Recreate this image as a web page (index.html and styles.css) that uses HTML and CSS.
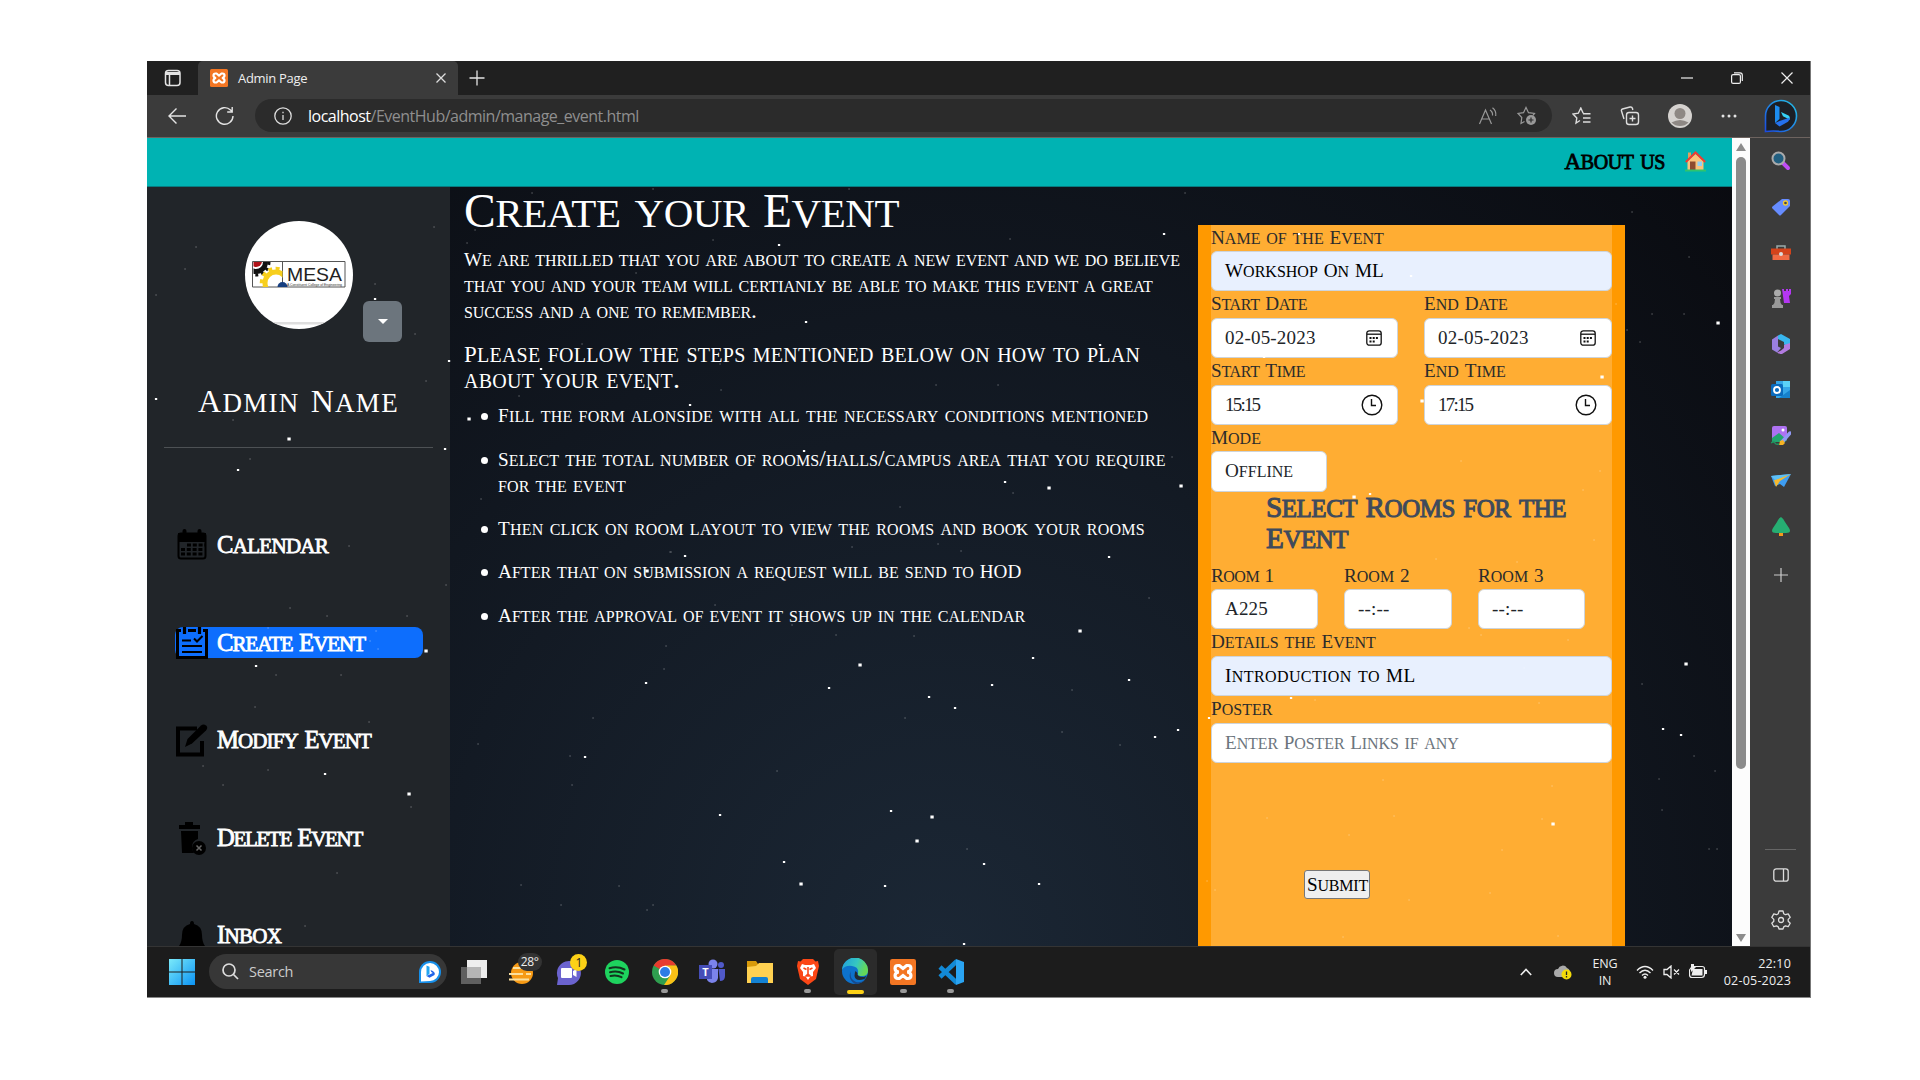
FILE: index.html
```html
<!DOCTYPE html>
<html lang="en">
<head>
<meta charset="utf-8">
<title>Admin Page</title>
<link rel="stylesheet" href="styles.css">
</head>
<body>
<div class="window">
  <header class="tabs">
    <svg class="workspaces" width="18" height="18" viewBox="0 0 18 18" fill="none" stroke="#e4e4e4" stroke-width="1.5"><rect x="1.5" y="1.5" width="14.500" height="15" rx="3"/><path d="M2 4.500h14" stroke-width="3"/><path d="M5.500 5v11"/></svg>
    <div class="tab">
      <svg width="18" height="18" viewBox="0 0 18 18"><rect width="18" height="18" rx="1.500" fill="#f37623"/><path d="M5.500 4.500h1L9 6.500l2.500-2h1q2 0 2 2T12 9q2.500.5 2.500 2.500t-2 2h-1L9 11.500l-2.500 2h-1q-2 0-2-2T6 9q-2.500-.5-2.500-2.500t2-2z" fill="none" stroke="#fff" stroke-width="2.200"/></svg>
      <span class="tab-title">Admin Page</span>
      <svg width="10" height="10" viewBox="0 0 10 10" stroke="#ddd" stroke-width="1.300"><path d="M.5.5l9 9M9.500.5l-9 9"/></svg>
    </div>
    <svg class="newtab" width="16" height="16" viewBox="0 0 16 16" stroke="#e4e4e4" stroke-width="1.300"><path d="M8 .5v15M.5 8h15"/></svg>
    <div class="controls">
      <svg width="12" height="12" viewBox="0 0 12 12" stroke="#eee" stroke-width="1.200"><path d="M0 6h12"/></svg>
      <svg width="12" height="12" viewBox="0 0 12 12" fill="none" stroke="#eee" stroke-width="1.200"><rect x=".6" y="2.600" width="8.800" height="8.800" rx="1.500"/><path d="M3 .8h6q2.300 0 2.300 2.300V9"/></svg>
      <svg width="12" height="12" viewBox="0 0 12 12" stroke="#eee" stroke-width="1.200"><path d="M.5.5l11 11M11.500.5l-11 11"/></svg>
    </div>
  </header>
  <div class="toolbar">
    <svg class="back" width="20" height="18" viewBox="0 0 20 18" fill="none" stroke="#e4e4e4" stroke-width="1.400"><path d="M19 9H2M9.500 1.500L2 9l7.500 7.500"/></svg>
    <svg class="reload" width="20" height="20" viewBox="0 0 20 20" fill="none" stroke="#e4e4e4" stroke-width="1.400"><path d="M18 10a8.300 8.300 0 1 1-2.500-6L17 5.500M17.200 1v5h-5"/></svg>
    <div class="address">
      <svg width="18" height="18" viewBox="0 0 18 18" fill="none" stroke="#ddd" stroke-width="1.300"><circle cx="9" cy="9" r="8.200"/><path d="M9 8v5M9 4.800v1.500"/></svg>
      <span class="url"><b>localhost</b>/EventHub/admin/manage_event.html</span>
      <svg class="read" width="20" height="18" viewBox="0 0 20 18" fill="none" stroke="#999" stroke-width="1.200"><path d="M1.500 17L7.500 3l6 14M3.500 12h8M12 3q3 2 2.500 5.500M14.500.8q4 3 3.200 8.200"/></svg>
      <svg width="20" height="20" viewBox="0 0 20 20" fill="none" stroke="#999" stroke-width="1.200"><path d="M7.500 15.500l-3.500 2 .8-6L1 7.500l5.500-.8L9 1.500l2.500 5.200 6 .8-1.500 1.800"/><circle cx="14" cy="14" r="5" fill="#999" stroke="none"/><path d="M14 11.500v5M11.500 14h5" stroke="#2b2b2b"/></svg>
    </div>
    <div class="tools">
      <svg width="20" height="18" viewBox="0 0 20 18" fill="none" stroke="#ddd" stroke-width="1.400"><path d="M8 13.500L4 16l.8-5L1 7l5.300-.8L8.800 1l2.400 5.200M11 6.800h7.500M11 11h7.500M11 15h7.500"/></svg>
      <svg width="20" height="20" viewBox="0 0 20 20" fill="none" stroke="#ddd" stroke-width="1.400"><rect x="6.500" y="6.500" width="12" height="12" rx="2.500"/><path d="M12.500 9.500v6M9.500 12.500h6M4 13L1.500 5Q1 3.500 2.500 3l7.500-2q2-.4 2.500 1.500l.3 1.500"/></svg>
      <svg width="24" height="24" viewBox="0 0 24 24"><circle cx="12" cy="12" r="12" fill="#d5d2cf"/><circle cx="12" cy="9.500" r="5.500" fill="#8e8884"/><path d="M3.500 18.500q8.500-5 17 0a12 12 0 0 1-17 0z" fill="#8e8884"/></svg>
      <svg width="16" height="4" viewBox="0 0 16 4" fill="#e4e4e4"><circle cx="2" cy="2" r="1.500"/><circle cx="8" cy="2" r="1.500"/><circle cx="14" cy="2" r="1.500"/></svg>
      <svg width="34" height="34" viewBox="0 0 34 34"><defs><linearGradient id="bing" x1="0" y1="1" x2="1" y2="0"><stop offset="0" stop-color="#1b4ae0"/><stop offset="1" stop-color="#25c2e8"/></linearGradient></defs><path d="M1.500 32.500V17A15.500 15.500 0 1 1 17 32.500q-8-1-15.500 0z" fill="#1c1f26" stroke="url(#bing)" stroke-width="1.600"/><path d="M11 6l4.500 2v12l-4.500 4z" fill="#1c8cf0"/><path d="M17 13l7.500 3.500q2 1.500 1 4.500l-3-2-3.500-1.800z" fill="#36d0f5"/><path d="M11 24l4.500 3.500 8.500-4.800q2-2 1.500-4L15.500 22z" fill="#2471ef"/></svg>
    </div>
  </div>
  <div class="main">
    <div class="page">
      <nav class="topnav">
        <span class="sc about"><i>A</i>bout us</span>
        <svg width="21" height="21" viewBox="0 0 21 21"><rect x="3" y="1.500" width="3" height="6" fill="#e0a060"/><path d="M2.500 10L10.500 3l8 7v9h-16z" fill="#f9c27a"/><path d="M.8 11L10.500 1.500 20.200 11" fill="none" stroke="#ee3b32" stroke-width="2"/><path d="M5 10.500h5.500V19H5z" fill="#8c4a2f"/><path d="M12.500 10.500h4.500v4.500h-4.500z" fill="#8fd0f5"/><path d="M0 18.500h21v2H0z" fill="#2fc46d"/></svg>
      </nav>
      <div class="content">
        <aside>
          <div class="profile">
            <svg class="avatar" width="108" height="108" viewBox="0 0 108 108"><defs><clipPath id="round"><circle cx="54" cy="54" r="54"/></clipPath><clipPath id="gearbox"><path d="M8.500 41h29v25h-29z"/></clipPath></defs><g clip-path="url(#round)"><path fill="#fff" d="M0 0h108v108H0z"/><path fill="#dedede" d="M0 101h108v2.500H0z"/></g><path d="M7.500 40.500h92.500v25.500H7.500zM37.500 40.500V66" fill="#fff" stroke="#555" stroke-width="1"/><g clip-path="url(#gearbox)" fill="none"><circle cx="11" cy="41" r="9.500" stroke="#111" stroke-width="5"/><circle cx="11" cy="41" r="13" stroke="#111" stroke-width="3" stroke-dasharray="3 3"/><circle cx="11" cy="40" r="6" fill="#b01218"/><circle cx="31" cy="62" r="11" stroke="#f7cf1d" stroke-width="5"/><circle cx="31" cy="62" r="14.500" stroke="#f7cf1d" stroke-width="3.500" stroke-dasharray="4 3.500"/></g><path d="M32.500 66a5 5 0 0 1 10 0z" fill="#173f80"/><text x="42" y="60" textLength="55" lengthAdjust="spacingAndGlyphs" font-family="Liberation Sans, sans-serif" font-size="18" fill="#222">MESA</text><text x="42" y="64.500" textLength="55" lengthAdjust="spacingAndGlyphs" font-family="Liberation Sans, sans-serif" font-size="4" fill="#333">A Constituent College of Engineering</text></svg>
            <div class="caret"><svg width="10" height="5" viewBox="0 0 10 5"><path d="M0 0h10L5 5z" fill="#fff"/></svg></div>
          </div>
          <h2 class="sc"><i>A</i>dmin <i>N</i>ame</h2>
          <hr>
          <ul class="menu">
            <li><svg width="34" height="34" viewBox="0 0 34 34"><rect x="3.500" y="5.500" width="27" height="25" rx="2.500" fill="none" stroke="#000" stroke-width="2"/><path d="M3 5h28v9H3z"/><path d="M9.500 3v5M24.500 3v5" stroke="#000" stroke-width="4" stroke-linecap="round"/><path d="M12 17h18M6 21.500h22M6 26h22" stroke="#000" stroke-width="3.200" stroke-dasharray="4 1.800"/></svg><span class="sc"><i>C</i>alendar</span></li>
            <li class="active"><svg width="34" height="34" viewBox="0 0 34 34" fill="none" stroke="#000"><path d="M6 4.500H2.500v27h29v-27H28M13 4.500h8" stroke-width="3"/><path d="M9.500 1v7M24.500 1v7" stroke-width="3.200"/><path d="M7 14.500h9M7 20h20M7 26h20" stroke-width="2"/><path d="M19 12.500l3 3 5.500-5.500" stroke-width="2"/></svg><span class="sc"><i>C</i>reate <i>E</i>vent</span></li>
            <li><svg width="34" height="34" viewBox="0 0 34 34"><path d="M22 5.500H3v26h24V18" fill="none" stroke="#000" stroke-width="4"/><path d="M10 24l2.500-8L26 2.500q2.500-2 5 0t0 5L17 20.500z"/></svg><span class="sc"><i>M</i>odify <i>E</i>vent</span></li>
            <li><svg width="34" height="34" viewBox="0 0 34 34"><path d="M4 4h6V1h8v3h7v4H4zM6 10h17v8q-6 2-6 8 0 3 2 6H7z"/><circle cx="24" cy="27" r="7"/><path d="M21.500 24.500l5 5M26.500 24.500l-5 5" stroke="#666" stroke-width="1.500"/></svg><span class="sc"><i>D</i>elete <i>E</i>vent</span></li>
            <li><svg width="34" height="34" viewBox="0 0 34 34"><path d="M15 6q0-3 2-3t2 3q8 2 8 11 0 7 3 11H4q3-4 3-11 0-9 8-11z"/></svg><span class="sc"><i>I</i>nbox</span></li>
          </ul>
        </aside>
        <section class="guide sc">
          <h1><i>C</i>reate your <i>E</i>vent</h1>
          <p><i>W</i>e are thrilled that you are about to create a new event and we do believe<br>that you and your team will certianly be able to make this event a great<br>success and a one to remember.</p>
          <h3><i>P</i>lease follow the steps mentioned below on how to plan<br>about your event.</h3>
          <ul>
            <li><i>F</i>ill the form alonside with all the necessary conditions mentioned</li>
            <li><i>S</i>elect the total number of rooms/halls/campus area that you require<br>for the event</li>
            <li><i>T</i>hen click on room layout to view the rooms and book your rooms</li>
            <li><i>A</i>fter that on submission a request will be send to <i>HOD</i></li>
            <li><i>A</i>fter the approval of event it shows up in the calendar</li>
          </ul>
        </section>
        <form class="event sc">
          <div class="field"><label><i>N</i>ame of the <i>E</i>vent</label><div class="input filled"><span><i>W</i>orkshop <i>O</i>n <i>ML</i></span></div></div>
          <div class="pair">
            <div class="field"><label class="tight"><i>S</i>tart <i>D</i>ate</label><div class="input"><span class="num">02-05-2023</span><svg class="cal" width="16" height="16" viewBox="0 0 16 16" fill="none" stroke="#111" stroke-width="1.300"><rect x=".8" y=".8" width="14.400" height="14.400" rx="2.500"/><path d="M1 4.200h14"/><path d="M3.500 8h8.500M3.500 11.500h6" stroke-width="2" stroke-dasharray="2 1.200"/></svg></div></div>
            <div class="field"><label><i>E</i>nd <i>D</i>ate</label><div class="input"><span class="num">02-05-2023</span><svg class="cal" width="16" height="16" viewBox="0 0 16 16" fill="none" stroke="#111" stroke-width="1.300"><rect x=".8" y=".8" width="14.400" height="14.400" rx="2.500"/><path d="M1 4.200h14"/><path d="M3.500 8h8.500M3.500 11.500h6" stroke-width="2" stroke-dasharray="2 1.200"/></svg></div></div>
          </div>
          <div class="pair">
            <div class="field"><label class="tight"><i>S</i>tart <i>T</i>ime</label><div class="input"><span class="num time">15:15</span><svg width="22" height="22" viewBox="0 0 22 22" fill="none" stroke="#111" stroke-width="1.400"><circle cx="11" cy="11" r="9.800"/><path d="M10.500 5v6.500H15"/></svg></div></div>
            <div class="field"><label><i>E</i>nd <i>T</i>ime</label><div class="input"><span class="num time">17:15</span><svg width="22" height="22" viewBox="0 0 22 22" fill="none" stroke="#111" stroke-width="1.400"><circle cx="11" cy="11" r="9.800"/><path d="M10.500 5v6.500H15"/></svg></div></div>
          </div>
          <div class="field mode"><label><i>M</i>ode</label><div class="input"><span><i>O</i>ffline</span></div></div>
          <h4><i>S</i>elect <i>R</i>ooms for the<br><i>E</i>vent</h4>
          <div class="rooms">
            <div class="field"><label class="room1"><i>R</i>oom <i>1</i></label><div class="input"><span class="num">A225</span></div></div>
            <div class="field"><label><i>R</i>oom <i>2</i></label><div class="input"><span class="num">--:--</span></div></div>
            <div class="field"><label><i>R</i>oom <i>3</i></label><div class="input"><span class="num">--:--</span></div></div>
          </div>
          <div class="field"><label><i>D</i>etails the <i>E</i>vent</label><div class="input filled intro"><span><i>I</i>ntroduction to <i>ML</i></span></div></div>
          <div class="field"><label><i>P</i>oster</label><div class="input hint"><span><i>E</i>nter <i>P</i>oster <i>L</i>inks if any</span></div></div>
          <div class="submit"><i>S</i>ubmit</div>
        </form>
      </div>
      <svg class="stars" viewBox="147 138 1585 808" fill="none" stroke="#fff" stroke-linecap="square"><path stroke-width="1.100" opacity=".45" d="M196 247h.1M185 269h.1M156 295h.1M434 227h.1M375 284h.1M415 334h.1M475 230h.1M467 243h.1M653 189h.1M532 193h.1M426 381h.1M233 420h.1M250 459h.1M349 546h.1M446 585h.1M290 608h.1M327 616h.1M407 616h.1M268 628h.1M376 631h.1M370 641h.1M378 649h.1M276 675h.1M341 675h.1M519 396h.1M481 499h.1M671 552h.1M666 646h.1M664 669h.1M255 707h.1M369 722h.1M203 766h.1M268 770h.1M223 785h.1M411 807h.1M337 873h.1M305 926h.1M593 718h.1M478 744h.1M570 756h.1M572 785h.1M521 885h.1M619 886h.1M561 905h.1M647 910h.1M653 905h.1M713 240h.1M1010 239h.1M636 273h.1M582 344h.1M720 364h.1M721 390h.1M936 385h.1M998 385h.1M1185 193h.1M849 189h.1M1013 493h.1M1172 457h.1M900 507h.1M852 547h.1M938 544h.1M961 551h.1M670 552h.1M1149 598h.1M715 605h.1M792 625h.1M914 636h.1M836 635h.1M1072 690h.1M905 718h.1M777 771h.1M967 849h.1M1120 745h.1M1062 732h.1M1632 212h.1M1689 257h.1M1652 314h.1M1684 314h.1M1627 330h.1M1640 342h.1M1616 304h.1M1642 684h.1M1461 461h.1M1600 471h.1M1583 490h.1M1436 559h.1M1594 540h.1M1517 562h.1M1469 628h.1M1481 635h.1M1568 640h.1M1315 700h.1M1524 668h.1M1539 703h.1M1383 780h.1M1552 786h.1M1267 818h.1M1394 816h.1M1542 819h.1M1349 835h.1M1502 850h.1M1207 881h.1M1215 890h.1M1490 893h.1M1409 900h.1M1343 937h.1M1558 936h.1M1662 810h.1M1715 771h.1M1659 779h.1M1694 756h.1M1709 849h.1M1717 849h.1"/><path stroke-width="2.200" d="M375 299h.1M449 361h.1M541 369h.1M156 399h.1M445 449h.1M238 470h.1M256 666h.1M650 389h.1M690 405h.1M685 556h.1M646 683h.1M325 774h.1M585 757h.1M779 245h.1M1164 234h.1M806 322h.1M1100 345h.1M804 451h.1M1005 482h.1M1109 557h.1M829 688h.1M720 815h.1M984 864h.1M1039 884h.1M784 862h.1M885 886h.1M891 811h.1M929 697h.1M955 708h.1M992 685h.1M1129 680h.1M1033 658h.1M1155 737h.1M1178 730h.1M964 944h.1M1411 276h.1M1663 729h.1M1681 735h.1M1299 234h.1M1370 494h.1M1264 357h.1M1291 698h.1M1209 718h.1"/><path stroke-width="3.200" d="M289 439h.1M469 419h.1M426 651h.1M647 571h.1M409 794h.1M1049 488h.1M1181 486h.1M1018 526h.1M1080 631h.1M860 665h.1M932 817h.1M917 841h.1M801 884h.1M1686 664h.1M1718 323h.1M1602 377h.1M1422 401h.1M1354 497h.1M1553 824h.1"/></svg>
    </div>
    <div class="scrollbar"><svg width="10" height="8" viewBox="0 0 10 8"><path d="M5 0l5 8H0z" fill="#8c8c8c"/></svg><div class="thumb"></div><svg width="10" height="8" viewBox="0 0 10 8"><path d="M0 0h10L5 8z" fill="#8c8c8c"/></svg></div>
    <div class="rail">
      <svg width="20" height="20" viewBox="0 0 20 20"><path d="M12 12l5 5" stroke="#c04df5" stroke-width="4" stroke-linecap="round"/><circle cx="7.500" cy="7.500" r="6" fill="#225f80" stroke="#aaa" stroke-width="2"/></svg>
      <svg width="20" height="20" viewBox="0 0 20 20"><path d="M11 2h6q2 0 2 2v5l-9 9q-1 1-2 0l-6.500-6.500q-1-1 0-2z" fill="#668cff"/><circle cx="14.500" cy="6" r="2" fill="#445" stroke="#f3cb2e" stroke-width="1.300"/></svg>
      <svg width="20" height="20" viewBox="0 0 20 20"><path d="M6 6V3h8v3" fill="none" stroke="#9aa" stroke-width="1.500"/><path d="M0 5.500h20v6H0z" fill="#d4431b"/><path d="M1.500 11.500h17V17h-17z" fill="#f16a43"/><circle cx="10" cy="11" r="2" fill="#ddd"/></svg>
      <svg width="20" height="20" viewBox="0 0 20 20"><path d="M11 1h2v2h2V1h2v2h1V1h2v5l-2 2 1 7h-6z" fill="#b437f2"/><circle cx="6.500" cy="5" r="3.500" fill="#aaa"/><path d="M3 9h7v2H9q0 4 2 6h1v3H1v-3h1q2-2 2-6H3z" fill="#999"/></svg>
      <svg width="20" height="20" viewBox="0 0 20 20"><path d="M1 5.500L7 1.500v11L10 14l-4 4.500-5-3z" fill="#9a7fe0"/><path d="M7 1.500L10 0l9 5v8l-6-2.500V8L7 5z" fill="#38b6ee"/><path d="M19 9v6l-8 5q-2 .5-5-1.500l4-2L13 14v-3z" fill="#b27be0"/></svg>
      <svg width="20" height="20" viewBox="0 0 20 20"><path d="M5 1h14v17H5z" fill="#35a6e8"/><path d="M12 1h7v6h-7z" fill="#5bd2f8"/><path d="M19 10v8H8z" fill="#1681cc"/><rect y="4" width="12" height="12" rx="1.500" fill="#0a6bbd"/><circle cx="6" cy="10" r="3" fill="none" stroke="#fff" stroke-width="1.800"/></svg>
      <svg width="20" height="20" viewBox="0 0 20 20"><rect x="1" width="15" height="15" rx="2" fill="#ae72f2"/><circle cx="12" cy="4" r="1.500" fill="#fff"/><path d="M1 12l7-5 8 7-2 2H1z" fill="#23a66f"/><path d="M11 16l8-9" stroke="#9199f5" stroke-width="3.500" stroke-linecap="round"/><path d="M8 19l1-4 3-1 2 3-2 2z" fill="#f5b323"/><path d="M0 17q3-2 4 0t4 1" fill="none" stroke="#21915f" stroke-width="1.500"/></svg>
      <svg width="20" height="20" viewBox="0 0 20 20"><path d="M0 4l20-2-7 13-4-3-5 2z" fill="#3e9df2"/><path d="M3 8l17-6L9 9l-4 6z" fill="#f5b82e"/><path d="M0 4l20-2L4 8z" fill="#5dc0f5"/></svg>
      <svg width="20" height="20" viewBox="0 0 20 20"><path d="M8 14h4v5H8z" fill="#f39a1d"/><path d="M10 0q3 2 4 5l4 6q3 5-3 5H5q-6 0-3-5l4-6q1-3 4-5z" fill="#26ae72"/></svg>
      <svg class="plus" width="14" height="14" viewBox="0 0 14 14" stroke="#ccc" stroke-width="1.200"><path d="M7 0v14M0 7h14"/></svg>
      <div class="rail-line"></div>
      <svg class="panel" width="16" height="14" viewBox="0 0 16 14" fill="none" stroke="#ddd" stroke-width="1.300"><rect x=".8" y=".8" width="14.400" height="12.400" rx="2.500"/><path d="M10.500 1v12"/></svg>
      <svg class="gear" width="20" height="20" viewBox="0 0 20 20" fill="none" stroke="#ddd" stroke-width="1.300"><path d="M8 1h4l.7 2.700 1.800 1 2.700-.8 2 3.500-2 2v1.800l2 2-2 3.500-2.700-.8-1.800 1L12 19H8l-.7-2.100-1.800-1-2.700.8-2-3.500 2-2V9.400l-2-2 2-3.500 2.700.8 1.800-1z" stroke-linejoin="round"/><circle cx="10" cy="10" r="2.500"/></svg>
    </div>
  </div>
  <footer class="taskbar">
    <svg class="start" width="26" height="26" viewBox="0 0 26 26"><defs><linearGradient id="win" x1="0" y1="0" x2="1" y2="1"><stop offset="0" stop-color="#7beafa"/><stop offset="1" stop-color="#0b93f4"/></linearGradient></defs><path fill="url(#win)" d="M0 0h12.500v12.500H0zM13.500 0H26v12.500H13.500zM0 13.500h12.500V26H0zM13.500 13.500H26V26H13.500z"/></svg>
    <div class="search"><svg width="17" height="17" viewBox="0 0 17 17" fill="none" stroke="#ddd" stroke-width="1.700"><circle cx="7" cy="7" r="6"/><path d="M11.500 11.500l4.500 4.500"/></svg><span>Search</span><svg width="22" height="22" viewBox="0 0 22 22"><path d="M0 22V11a11 11 0 1 1 11 11z" fill="#168fea"/><path d="M2 20.500V11a9 9 0 1 1 9 9z" fill="#fff"/><path d="M7.500 4.500l3 1.200v7l-3 2.500z" fill="#24a5f0"/><path d="M7.500 15l3 1.800 5-2.800q1.500-3-4-5l.8 2 1.500 1z" fill="#2064e8"/></svg></div>
    <div class="apps">
      <div><svg width="28" height="26" viewBox="0 0 28 26"><path d="M7 1h20v18H7z" fill="#eee"/><path d="M1 8h20v17H1z" fill="#707070" opacity=".8"/><path d="M7 8h14v11H7z" fill="#b5b5b5"/></svg></div>
      <div><svg width="28" height="28" viewBox="0 0 28 28"><circle cx="14" cy="15" r="11" fill="#f79a15"/><path d="M5 10h16M1 16h14M18 16h5M1 21.500h20" stroke="#fbdf9e" stroke-width="2"/></svg><span class="temp">28°</span></div>
      <div><svg width="26" height="26" viewBox="0 0 26 26"><path d="M1 26l1-7A12 12 0 1 1 13 26z" fill="#6b63cf"/><rect x="5" y="9" width="11" height="10" rx="1" fill="#fff"/><path d="M17 12l3.500-2v8L17 16z" fill="#fff"/></svg><span class="badge">1</span></div>
      <div><svg width="24" height="24" viewBox="0 0 24 24"><circle cx="12" cy="12" r="12" fill="#1ed35e"/><path d="M4.500 8.200q8-2.500 15 1.300M5 12.300q7-2 13 1.200M5.500 16q6-1.500 11 1.200" fill="none" stroke="#12331e" stroke-width="2" stroke-linecap="round"/></svg></div>
      <div class="run"><svg width="26" height="26" viewBox="0 0 26 26"><circle cx="13" cy="13" r="13" fill="#2f9e4f"/><path d="M13 13L1.700 6.500A13 13 0 0 1 24.300 6.500L13 7z" fill="#e63b2e"/><path d="M13 6.500h11.300A13 13 0 0 1 12 26l6-9z" fill="#fbc116"/><circle cx="13" cy="13" r="6.300" fill="#fff"/><circle cx="13" cy="13" r="5" fill="#2c7ce5"/></svg></div>
      <div><svg width="26" height="26" viewBox="0 0 26 26"><circle cx="14" cy="5" r="4.500" fill="#7b83eb"/><circle cx="22" cy="6" r="3" fill="#5059c9"/><path d="M8 10h11v9a6 6 0 0 1-11 2z" fill="#7b83eb"/><path d="M19.500 10H26v7q0 5-5 5z" fill="#5059c9"/><path d="M0 6h13v14H0z" fill="#464eb8"/><text x="3.300" y="17" font-family="Open Sans, sans-serif" font-weight="700" font-size="11" fill="#fff">T</text></svg></div>
      <div><svg width="26" height="26" viewBox="0 0 26 26"><path d="M0 2h9l2 3v4H0z" fill="#d89a0a"/><path d="M0 8l9-1 3-3h14v20H0z" fill="#ffd151"/><path d="M4 24v-4q0-2 2-2h13q2 0 2 2v4z" fill="#1382d3"/></svg></div>
      <div class="run"><svg width="22" height="26" viewBox="0 0 22 26"><path d="M6 0h10l2.500 2.500L21 2l1 5-3 13-8 6-8-6L0 7l1-5 2.500.5z" fill="#fb4716"/><path d="M5 5l3 1h6l3-1 2 4-3 4v4l-3 1-2 3-2-3-3-1v-4L3 9z" fill="#fff"/><path d="M6.500 9l3 1.500M15.500 9l-3 1.500M11 8v7l-2 2h4l-2-2" stroke="#fb4716" stroke-width="1.600" fill="none"/></svg></div>
      <div class="run current"><svg width="26" height="26" viewBox="0 0 26 26"><defs><linearGradient id="edge" x1="0" y1="0" x2="1" y2=".3"><stop offset="0" stop-color="#1f9bdd"/><stop offset=".6" stop-color="#35c7c1"/><stop offset="1" stop-color="#65d958"/></linearGradient></defs><circle cx="13" cy="13" r="13" fill="#0d72cc"/><path d="M0 12A13 13 0 0 1 26 13q0 5-6 5-5 0-4-3 1-6-6-7-7-1-10 4z" fill="url(#edge)"/><path d="M9 13q-2 8 5 11 6 1 10-3A13 13 0 0 1 13 26Q5 21 9 13z" fill="#174a8d"/><path d="M15.500 15q-1 4 6 4l3-1-2 3q-9 3-10-3 0-3 1-5z" fill="#222a31"/></svg></div>
      <div class="run"><svg width="26" height="26" viewBox="0 0 18 18"><rect width="18" height="18" rx="1.500" fill="#f37623"/><path d="M5.500 4.500h1L9 6.500l2.500-2h1q2 0 2 2T12 9q2.500.5 2.500 2.500t-2 2h-1L9 11.500l-2.500 2h-1q-2 0-2-2T6 9q-2.500-.5-2.500-2.500t2-2z" fill="none" stroke="#fff" stroke-width="2.200"/></svg></div>
      <div class="run"><svg width="26" height="26" viewBox="0 0 26 26"><path d="M2 8l17 16M2 18L19 2" stroke="#1289d6" stroke-width="4.500"/><path d="M18 0l8 3v20l-8 3z" fill="#2aa4f2"/></svg></div>
    </div>
    <div class="tray">
      <svg width="12" height="8" viewBox="0 0 12 8" fill="none" stroke="#eee" stroke-width="1.600"><path d="M.8 7L6 1.500 11.200 7"/></svg>
      <svg class="cloud" width="18" height="16" viewBox="0 0 18 16"><path d="M4 13a4 4 0 0 1 0-8 5 5 0 0 1 9-1q3 1 3 5v4z" fill="#aaa"/><circle cx="12.500" cy="10.500" r="5" fill="#f5dc0a"/><path d="M12.500 7.500v3.500M12.500 12v1.500" stroke="#222" stroke-width="1.300"/></svg>
      <div class="lang">ENG<br>IN</div>
      <svg class="wifi" width="18" height="14" viewBox="0 0 18 14" fill="none" stroke="#eee" stroke-width="1.400"><path d="M1 5.500q8-8 16 0M3.500 8q5.500-5.500 11 0M6 10.500q3-3 6 0"/><circle cx="9" cy="12.300" r="1.500" fill="#eee" stroke="none"/></svg>
      <svg width="17" height="14" viewBox="0 0 17 14" fill="none" stroke="#eee" stroke-width="1.300"><path d="M1 4.500h3L8 1v12L4 9.500H1zM11 4.500l5 5M16 4.500l-5 5"/></svg>
      <svg width="18" height="15" viewBox="0 0 18 15"><path d="M3 2.500h10q2.500 0 2.500 2v6q0 3-3 3H3q-2.500 0-2.500-3V6z" fill="none" stroke="#eee" stroke-width="1.200"/><path d="M4 5h9.500v6.500H2.500zM16 6h2v4h-2zM2 0h3v3h2L2 8z" fill="#eee"/></svg>
      <div class="clock">22:10<br>02-05-2023</div>
    </div>
  </footer>
</div>
</body>
</html>
```
FILE: styles.css
```css
* { box-sizing: border-box; }
body { margin: 0; background: #fff; font-family: "Open Sans", sans-serif; }
svg { display: block; flex: none; }
h1, h2, h3, h4, p, ul { margin: 0; padding: 0; font-weight: 400; }
.window { display: flex; flex-direction: column; width: 1664px; height: 937px; margin: 61px 0 0 147px; overflow: hidden; border-right: 1px solid #777; border-bottom: 1px solid #888; background: #1c1c1c; }

/* small capitals: capitals are only slightly taller than the rest */
.sc { font-family: "Liberation Serif", serif; font-variant: small-caps; white-space: nowrap; }
.sc i { font-style: normal; font-size: .82em; line-height: 0; }

/* browser chrome */
.tabs { display: flex; align-items: center; height: 34px; background: #202020; color: #eee; }
.workspaces { margin-left: 17px; }
.tab { display: flex; align-items: center; width: 260px; height: 34px; margin-left: 16px; padding: 0 12px 0 12px; background: #3b3b3b; border-radius: 5px 5px 0 0; }
.tab-title { flex: 1; margin-left: 10px; font-size: 13px; letter-spacing: -.3px; }
.newtab { margin-left: 11px; }
.controls { display: flex; gap: 38px; margin-left: auto; margin-right: 17px; }
.toolbar { display: flex; align-items: center; height: 43px; background: #3b3b3b; border-bottom: 1px solid #6d635f; }
.back { margin-left: 20px; }
.reload { margin-left: 28px; }
.address { display: flex; align-items: center; width: 1297px; height: 33px; margin-left: 20px; padding: 0 15px 0 19px; border-radius: 17px; background: #2b2b2b; }
.url { margin-left: 16px; font-size: 16px; letter-spacing: -.5px; color: #8f8f8f; }
.url b { color: #fff; font-weight: 400; }
.read { margin-left: auto; margin-right: 19px; }
.tools { display: flex; align-items: center; margin-left: 20px; gap: 28px; }
.tools svg:nth-child(4) { margin-left: 1px; }
.tools svg:nth-child(5) { margin-left: -1px; }

.main { display: flex; height: 808px; }
.page { position: relative; display: flex; flex-direction: column; width: 1585px; overflow: hidden; background: radial-gradient(ellipse at bottom, #1b2735 0%, #090a0f 100%); }
.stars { position: absolute; inset: 0; width: 1585px; height: 808px; }
.topnav { display: flex; flex: none; align-items: center; justify-content: flex-end; height: 49px; padding-right: 26px; background: #00b3b3; border-bottom: 1px solid #067c80; }
.about { margin-right: 20px; font-size: 28px; line-height: 44px; height: 48px; letter-spacing: -.4px; -webkit-text-stroke: .8px; }
.content { display: flex; height: 759px; }

aside { flex: none; width: 303px; background: #212529; color: #fff; }
.profile { display: flex; padding: 34px 0 0 98px; height: 156px; }
.caret { display: flex; align-items: center; justify-content: center; width: 39px; height: 41px; margin: 80px 0 0 10px; border-radius: 6px; background: #6c757d; }
aside h2 { height: 104px; padding-left: 51px; font-size: 39px; line-height: 111px; letter-spacing: 1.300px; }
hr { width: 269px; height: 1px; margin: 0 0 0 17px; border: 0; background: #4d5154; }
.menu { display: flex; flex-direction: column; gap: 66.500px; padding: 82px 8px 0 28px; list-style: none; }
.menu li { display: flex; align-items: center; width: 248px; height: 31px; border-radius: 8px; font-size: 30px; line-height: 26px; letter-spacing: -.7px; -webkit-text-stroke: .8px; }
.menu li:nth-child(2) { letter-spacing: -1.020px; }
.menu li:nth-child(3) { letter-spacing: -.880px; }
.menu li:nth-child(4) { letter-spacing: -1.290px; }
.menu svg { -webkit-text-stroke: 0; }
.menu .sc { margin-left: 8px; height: 30px; }
.menu .active { background: #0d6efd; }

.guide { flex: none; width: 748px; padding-left: 14px; color: #fff; font-size: 23.400px; }
.guide h1 { height: 58px; font-size: 58px; line-height: 42px; letter-spacing: -.46px; }
.guide p { line-height: 26px; height: 91px; letter-spacing: -.05px; }
.guide h3 { height: 65.600px; padding-top: 4.200px; font-size: 28px; line-height: 26.500px; letter-spacing: .24px; }
.guide ul { list-style: none; padding-left: 34px; }
.guide li { position: relative; line-height: 26.100px; margin-bottom: 17.300px; letter-spacing: .25px; }
.guide li:nth-child(2) { letter-spacing: .12px; }
.guide li:nth-child(n+4) { letter-spacing: .05px; }
.guide li::before { content: ""; position: absolute; left: -17px; top: 12px; width: 7px; height: 7px; border-radius: 50%; background: #fff; }

.event { flex: none; width: 427px; height: 730px; margin-top: 38px; border: solid #ff9900; border-width: 0 13px; background: #ffad33; color: #2b2b2b; font-size: 23.400px; }
.field label { display: block; height: 26.400px; line-height: 22px; }
.tight { letter-spacing: -.3px; }
.room1 { letter-spacing: -.5px; }
.input { display: flex; align-items: center; justify-content: space-between; height: 40.400px; padding: 0 14px 0 13px; border: 1px solid #ced4da; border-radius: 6px; background: #fff; line-height: 34px; color: #212529; }
.input > span { height: 38px; }
.num { font-size: 19px; line-height: 38px; letter-spacing: .2px; }
.time { letter-spacing: -1.800px; }
.cal { margin-right: 1px; }
.filled { background: #e8f0fe; color: #000; }
.intro { letter-spacing: .4px; }
.hint { color: #6c757d; letter-spacing: -.1px; }
.pair { display: grid; grid-template-columns: 187px 188px; gap: 26px; }
.mode .input { width: 116px; }
.event h4 { height: 73.400px; margin-top: -2.400px; padding-top: 1px; padding-left: 55px; color: #3e4a5c; font-size: 35.700px; line-height: 31px; letter-spacing: -.490px; -webkit-text-stroke: 1px; }
.rooms { display: grid; grid-template-columns: 107px 108px 107px; gap: 26px; }
.submit { width: 66px; height: 29px; margin: 107px 0 0 93px; padding-left: 2px; border: 1px solid #777; border-radius: 3px; background: #efefef; color: #000; line-height: 24px; letter-spacing: -.2px; }

.scrollbar { display: flex; flex-direction: column; align-items: center; width: 18px; padding: 5px 0 4px; background: #fcfcfc; }
.thumb { width: 10px; height: 612px; margin: 6px 0 auto; border-radius: 5px; background: #8b8b8b; }
.rail { display: flex; flex-direction: column; align-items: center; flex: 1; padding: 13.500px 0 0 1px; gap: 25.800px; background: #3b3b3b; }
.plus { margin-top: 5px; }
.rail-line { width: 31px; height: 1px; margin: 241px 0 -8px; background: #666; }
.gear { margin-top: 2px; }

.taskbar { display: flex; align-items: center; height: 52px; border-top: 1px solid #343434; background: #1c1c1c; color: #eee; }
.start { margin-left: 22px; }
.search { display: flex; align-items: center; width: 238px; height: 35px; margin-left: 14px; padding: 0 6px 0 13px; border-radius: 18px; background: #373737; font-size: 14.500px; letter-spacing: -.3px; color: #ccc; }
.search span { margin: 0 auto 0 10px; }
.apps { display: flex; margin-left: 3px; }
.apps div { position: relative; display: flex; align-items: center; justify-content: center; width: 47.700px; height: 50px; }
.temp { position: absolute; left: 20px; top: 6px; padding: 0 3px; border-radius: 9px; background: #333; font-size: 12px; letter-spacing: -.3px; line-height: 18px; }
.badge { position: absolute; left: 25px; top: 7px; width: 17px; height: 17px; border-radius: 50%; background: #fcd116; color: #222; font-size: 12px; line-height: 17px; text-align: center; }
.run::after { content: ""; position: absolute; bottom: 4px; width: 7px; height: 4px; border-radius: 2px; background: #999; }
.apps .current { width: 43px; height: 46px; margin: 2px 2.350px 0; border-radius: 5px; background: #2b2b2b; }
.current svg { margin-top: -2px; }
.current::after { bottom: 1px; width: 17px; background: #fcd116; }
.tray { display: flex; align-items: center; margin-left: auto; padding-right: 19px; font-size: 12.500px; line-height: 17px; }
.cloud { margin: 0 19px 0 22px; }
.lang { width: 28px; text-align: center; letter-spacing: -.2px; }
.wifi { margin: 0 9px 0 17px; }
.tray svg:nth-child(6) { margin-left: 9px; }
.clock { width: 84px; text-align: right; letter-spacing: .2px; }
```
